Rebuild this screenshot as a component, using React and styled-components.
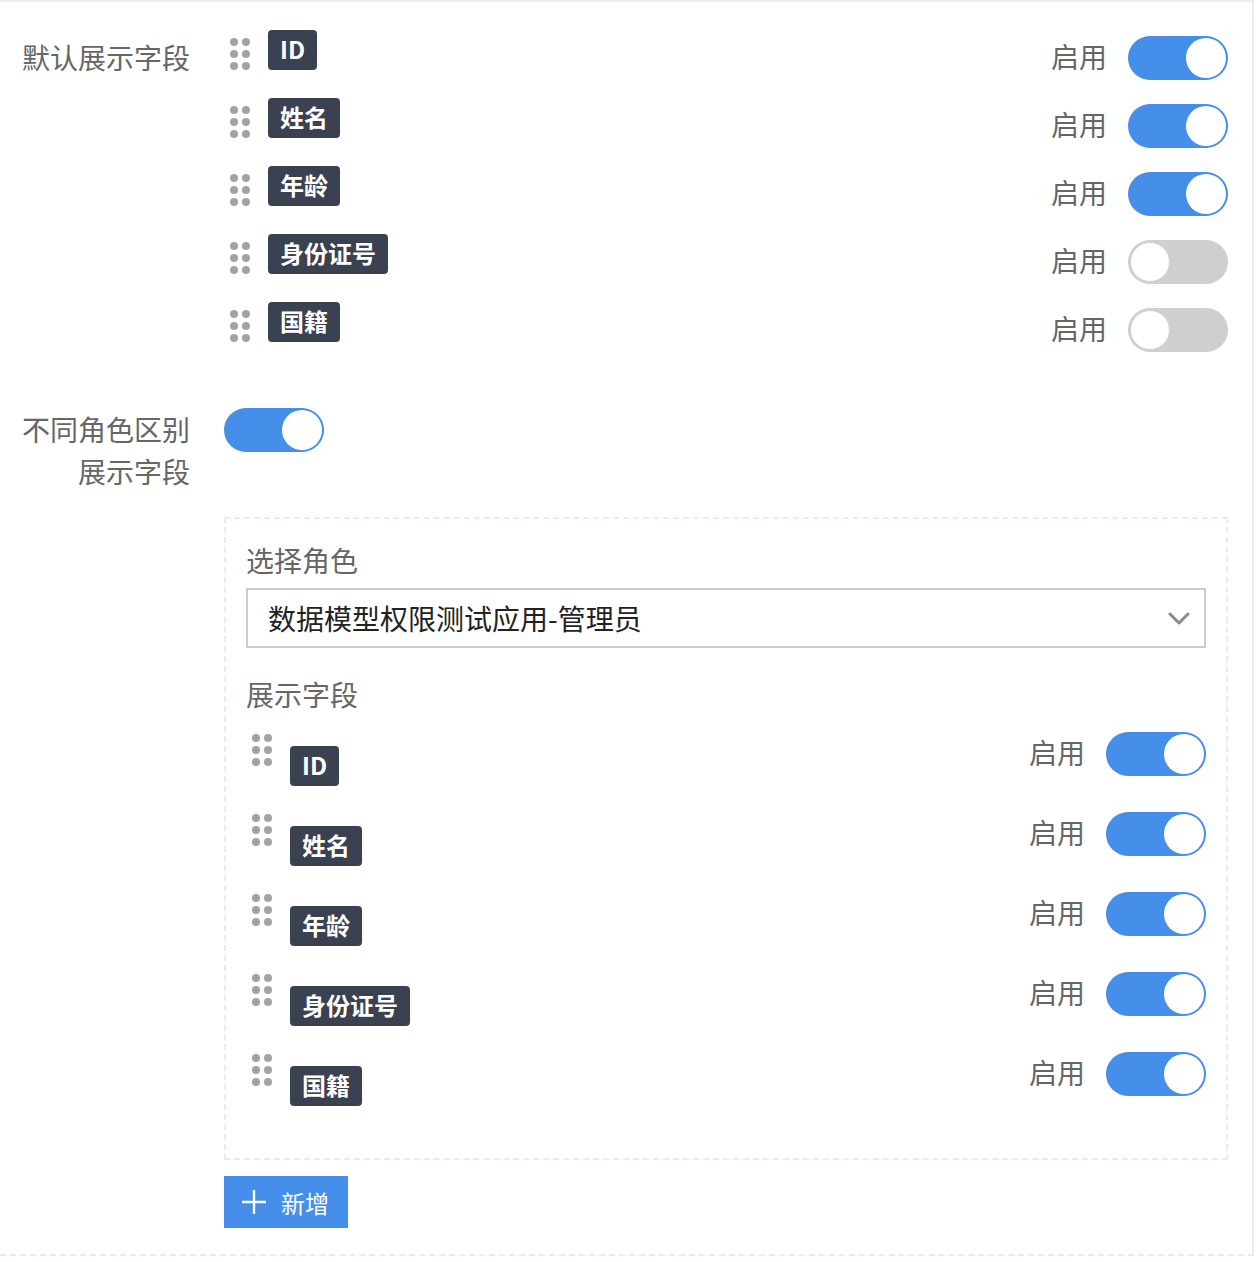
import styled, { createGlobalStyle } from "styled-components";

const GlobalStyle = createGlobalStyle`
  body {
    margin: 0;
    background: #fff;
    font-family: "Noto Sans CJK SC", "Noto Sans", sans-serif;
  }
`;

const blue = "#458ee9";
const tagColor = "#3a4151";
const labelColor = "#666666";
const dashColor = "#e8eaf5";

const fields = ["ID", "姓名", "年龄", "身份证号", "国籍"];
const defaultOn = [true, true, true, false, false];

function DragDots() {
  const dots = [];
  for (let r = 0; r < 3; r++) {
    for (let c = 0; c < 2; c++) {
      dots.push(<circle key={`${r}-${c}`} cx={4 + c * 12} cy={4 + r * 12} r="4" />);
    }
  }
  return (
    <svg width="20" height="32" viewBox="0 0 20 32" fill="#a3a3a3">
      {dots}
    </svg>
  );
}

function FieldRow({ name, on, tagOffset }) {
  return (
    <Row>
      <Handle>
        <DragDots />
      </Handle>
      <Tag $offset={tagOffset}>{name}</Tag>
      <RowRight>
        <EnableText>启用</EnableText>
        <Toggle $on={on}>
          <Knob $on={on} />
        </Toggle>
      </RowRight>
    </Row>
  );
}

export default function App() {
  return (
    <>
      <GlobalStyle />
      <Page>
        <FormItem>
          <Label>默认展示字段</Label>
          <FieldList $gap={24}>
            {fields.map((f, i) => (
              <FieldRow key={f} name={f} on={defaultOn[i]} tagOffset={-6} />
            ))}
          </FieldList>
        </FormItem>

        <FormItem $top={56}>
          <Label>
            不同角色区别
            <br />
            展示字段
          </Label>
          <div>
            <Toggle $on>
              <Knob $on />
            </Toggle>
          </div>
        </FormItem>

        <Content>
          <RoleBox>
            <BoxTitle>选择角色</BoxTitle>
            <Select>
              <span>数据模型权限测试应用-管理员</span>
              <svg width="22" height="14" viewBox="0 0 22 14">
                <path
                  d="M2 3 L11 12 L20 3"
                  fill="none"
                  stroke="#8a8a8a"
                  strokeWidth="3"
                  strokeLinecap="round"
                  strokeLinejoin="round"
                />
              </svg>
            </Select>
            <BoxTitle $top={25}>展示字段</BoxTitle>
            <FieldList $gap={26} $top={17}>
              {fields.map((f) => (
                <FieldRow key={f} name={f} on tagOffset={14} />
              ))}
            </FieldList>
          </RoleBox>
          <AddButton>
            <svg width="24" height="24" viewBox="0 0 24 24">
              <path d="M12 0 V24 M0 12 H24" stroke="#fff" strokeWidth="2.4" />
            </svg>
            <span>新增</span>
          </AddButton>
        </Content>
      </Page>
    </>
  );
}

const Page = styled.div`
  width: 1228px;
  padding: 34px 24px 26px 0;
  border-top: 2px solid #eceef7;
  border-right: 2px solid ${dashColor};
  border-bottom: 2px dashed ${dashColor};
`;

const FormItem = styled.div`
  display: grid;
  grid-template-columns: 190px 1fr;
  column-gap: 34px;
  margin-top: ${(p) => p.$top || 0}px;
`;

const Label = styled.div`
  text-align: right;
  white-space: nowrap;
  font-size: 28px;
  line-height: 42px;
  color: ${labelColor};
`;

const FieldList = styled.div`
  display: flex;
  flex-direction: column;
  gap: ${(p) => p.$gap}px;
  margin-top: ${(p) => p.$top || 0}px;
`;

const Row = styled.div`
  display: flex;
  align-items: flex-start;
  min-height: 44px;
`;

const Handle = styled.div`
  width: 44px;
  flex-shrink: 0;
  padding-left: 6px;
  padding-top: 2px;
  box-sizing: border-box;
  svg {
    display: block;
  }
`;

const Tag = styled.span`
  display: inline-block;
  height: 40px;
  line-height: 38px;
  padding: 0 12px;
  margin-top: ${(p) => p.$offset}px;
  border-radius: 4px;
  background: ${tagColor};
  color: #fff;
  font-size: 24px;
  font-weight: 700;
`;

const RowRight = styled.div`
  margin-left: auto;
  display: flex;
  align-items: center;
  gap: 21px;
`;

const EnableText = styled.span`
  font-size: 28px;
  line-height: 40px;
  margin-bottom: 4px;
  color: ${labelColor};
`;

const Toggle = styled.div`
  position: relative;
  width: 100px;
  height: 44px;
  border-radius: 22px;
  background: ${(p) => (p.$on ? blue : "#cfcfcf")};
  flex-shrink: 0;
`;

const Knob = styled.div`
  position: absolute;
  top: 2px;
  left: ${(p) => (p.$on ? "58px" : "2px")};
  width: 40px;
  height: 40px;
  border-radius: 50%;
  background: #fff;
  box-sizing: border-box;
  border: ${(p) => (p.$on ? "none" : "1px solid #d4d4d4")};
`;

const Content = styled.div`
  margin-left: 224px;
  margin-top: 25px;
`;

const RoleBox = styled.div`
  border: 2px dashed ${dashColor};
  padding: 20px 20px 52px;
`;

const BoxTitle = styled.div`
  font-size: 28px;
  line-height: 42px;
  color: ${labelColor};
  margin-top: ${(p) => p.$top || 0}px;
`;

const Select = styled.div`
  margin-top: 7px;
  height: 60px;
  box-sizing: border-box;
  border: 2px solid #cccccc;
  display: flex;
  align-items: center;
  justify-content: space-between;
  padding: 0 14px 0 20px;
  font-size: 28px;
  color: #222222;
  svg {
    display: block;
  }
`;

const AddButton = styled.button`
  margin-top: 16px;
  width: 124px;
  height: 52px;
  border: none;
  background: ${blue};
  color: #fff;
  display: flex;
  align-items: center;
  gap: 15px;
  padding: 0 0 0 18px;
  font-family: "Noto Sans CJK SC", sans-serif;
  font-size: 24px;
  cursor: pointer;
  svg {
    display: block;
  }
`;
